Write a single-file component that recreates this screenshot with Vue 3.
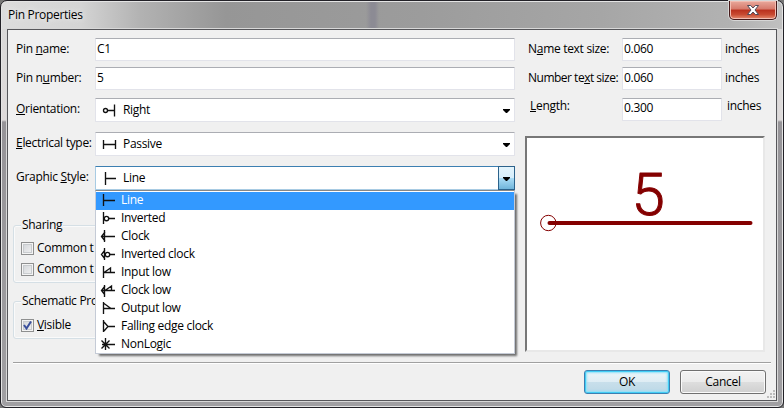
<script setup>
const items = [
  { label: 'Line', d: 'M3.5 2v12M4 8.5h11' },
  { label: 'Inverted', d: 'M3.5 2v12M9 8.5h6', dot: [6.5, 8.5] },
  { label: 'Clock', d: 'M4.5 2v12M2 8.5h13M5 4l-3.5 4.5L5 13' },
  { label: 'Inverted clock', d: 'M4.5 2v12M9.5 8.5h5.5M5 4L1.5 8.5L5 13', dot: [7.5, 8.5] },
  { label: 'Input low', d: 'M3.5 2v12M4 8.5h11M4 8.5L10.5 4v4.5' },
  { label: 'Clock low', d: 'M4.5 3v12M2 8.5h13M5 4L1.5 8.5L5 13M5 8.5L11.5 4v4.5' },
  { label: 'Output low', d: 'M3.5 2v12M4 8.5h11M4 3.5l7 5' },
  { label: 'Falling edge clock', d: 'M3.5 2v12M7.5 8.5h7.5M4 4l4 4.5l-4 4.5' },
  { label: 'NonLogic', d: 'M5.5 2v12M2 8.5h13M1.5 4.5l8 8M9.5 4.5l-8 8' },
]
</script>

<template>
  <div class="window">
    <header class="titlebar">
      <span class="title">Pin Properties</span>
      <button class="close" aria-label="Close">
        <svg width="14" height="12" viewBox="0 0 14 12">
          <path d="M1.5 1.5h3.2L7 4l2.3-2.5h3.2L9 6l3.5 4.5H9.3L7 8l-2.3 2.5H1.5L5 6z" fill="#fff" stroke="#4e4a58" />
        </svg>
      </button>
    </header>
    <main class="client">
      <div class="body">
        <section class="left">
          <div class="row"><label class="lbl">Pin <u>n</u>ame:</label><div class="field">C1</div></div>
          <div class="row"><label class="lbl">Pin n<u>u</u>mber:</label><div class="field">5</div></div>
          <div class="row combo-row first">
            <label class="lbl"><u>O</u>rientation:</label>
            <div class="field combo">
              <svg class="ico" width="18" height="16"><g class="ink"><circle cx="4.5" cy="8.5" r="2" /><path d="M6.5 8.5h7M13.5 2.5v12" /></g></svg>
              <span>Right</span><i class="arrow"></i>
            </div>
          </div>
          <div class="row combo-row">
            <label class="lbl"><u>E</u>lectrical type:</label>
            <div class="field combo">
              <svg class="ico" width="18" height="16"><path class="ink" d="M2.5 4v9M14.5 4v9M3 8.5h11" /></svg>
              <span>Passive</span><i class="arrow"></i>
            </div>
          </div>
          <div class="row combo-row">
            <label class="lbl">Graphic <u>S</u>tyle:</label>
            <div class="field combo open">
              <svg class="ico" width="18" height="16"><path class="ink" d="M4.5 2v13M5 8.5h10" /></svg>
              <span>Line</span><b class="drop"><i class="arrow"></i></b>
              <ul class="list">
                <li v-for="(it, i) in items" :key="it.label" :class="{ sel: i === 0 }">
                  <svg width="17" height="17"><g class="ink"><path :d="it.d" /><circle v-if="it.dot" :cx="it.dot[0]" :cy="it.dot[1]" r="2.2" /></g></svg>
                  <span>{{ it.label }}</span>
                </li>
              </ul>
            </div>
          </div>
          <div class="group sharing">
            <span class="legend">Sharing</span>
            <div class="check"><i class="box"></i>Common t</div>
            <div class="check"><i class="box"></i>Common t</div>
          </div>
          <div class="group schematic">
            <span class="legend">Schematic Pro</span>
            <div class="check">
              <i class="box"><svg width="9" height="9"><path d="M1 4l2.5 3.5L8 .5" fill="none" stroke="#3a4f9c" stroke-width="2" /></svg></i>
              <span><u>V</u>isible</span>
            </div>
          </div>
        </section>
        <section class="right">
          <div class="row"><label class="lbl">N<u>a</u>me text size:</label><div class="field">0.060</div><span class="unit">inches</span></div>
          <div class="row"><label class="lbl tight">Number te<u>x</u>t size:</label><div class="field">0.060</div><span class="unit">inches</span></div>
          <div class="row len"><label class="lbl"><u>L</u>ength:</label><div class="field">0.300</div><span class="unit">inches</span></div>
          <div class="preview">
            <svg width="236" height="211" viewBox="527 138 236 211">
              <text x="631.5" y="215" class="pin">5</text>
              <path d="M549.5 223h201" stroke="#840000" stroke-width="4" stroke-linecap="round" />
              <circle cx="548.3" cy="223" r="7.7" fill="none" stroke="#840000" />
            </svg>
          </div>
        </section>
      </div>
      <footer class="footer">
        <button class="btn ok">OK</button>
        <button class="btn">Cancel</button>
        <svg class="grip" width="9" height="9"><path d="M7 0h2v2H7zM4 3h2v2H4zM7 3h2v2H7zM1 6h2v2H1zM4 6h2v2H4zM7 6h2v2H7z" fill="#bcbcbc" /></svg>
      </footer>
    </main>
  </div>
</template>

<style>
body { margin: 0; background: #777; overflow: hidden; }
</style>

<style scoped>
* { box-sizing: border-box; }
.window {
  width: 784px; height: 408px; padding: 0 6px 6px; position: relative;
  border: 1px solid #222127; border-radius: 7px 7px 6px 6px;
  font: 12px/16px "Open Sans", "Noto Sans", sans-serif; letter-spacing: -0.3px; color: #000;
  background:
    linear-gradient(90deg, transparent 365px, #8c8b94 370px, #8c8b94 374px, transparent 378px) 0 0 / 100% 28px no-repeat,
    linear-gradient(90deg, #dcdcdc 0, #d4d4d4 80px, #b2b2b2 140px, #a3a3a3 185px, #969696 225px, #9c9c9c 420px, #a6a6a6 600px, #b2b2b2 730px, #c0c0c0) 0 0 / 100% 28px no-repeat,
    linear-gradient(180deg, #d8d8d8 0, #dedada 119px, #969498 121px, #a09fa2 100%);
  box-shadow: inset 0 0 0 1px #e4e4e4;
}
.titlebar { height: 28px; display: flex; justify-content: space-between; }
.title { padding: 6px 0 0 1px; text-shadow: 0 0 6px #fff; }
.close {
  width: 48px; height: 19px; margin: 0; padding: 0; display: flex; align-items: center; justify-content: center;
  border: 1px solid #46191a; border-top: 0; border-radius: 0 0 5px 5px;
  background: linear-gradient(#e9a99c, #d6796b 45%, #b9301d 50%, #c84a31 75%, #e58c70);
  box-shadow: inset 0 0 0 1px #f2bdb2, 0 0 0 1px #d6d6d6;
}
.client {
  height: 372px; border: 1px solid #56565a; background: #f0f0f0;
  box-shadow: 0 0 0 1px #d8d8d8; display: flex; flex-direction: column;
}
.body { height: 333px; display: flex; margin: 0 5px; border-bottom: 1px solid #a0a0a0; box-shadow: 0 1px #fff; }
.left { width: 502px; padding-top: 8px; margin-right: 10px; }
.row { display: flex; height: 23px; margin-bottom: 6px; }
.lbl { width: 82px; padding: 3px 0 0 3px; white-space: nowrap; flex: none; }
u { text-decoration: underline; text-underline-offset: 1px; text-decoration-thickness: 1px; text-decoration-skip-ink: none; }
.field {
  flex: 1; background: #fff; border: 1px solid #e2e3ea; border-top-color: #abadb3; border-radius: 1px;
  padding: 2px 1px; white-space: nowrap;
}
.combo-row { height: 24px; margin-bottom: 10px; }
.combo-row.first { margin-top: 8px; }
.left .row:nth-child(2) { margin-bottom: 8px; }
.combo { position: relative; display: flex; align-items: flex-start; padding: 3px 0 0 5px; }
.combo > span { margin-left: 4px; flex: 1; }
.ico { flex: none; }
.ink { fill: none; stroke: #111; stroke-width: 1.35; }
.arrow { width: 7px; height: 4px; margin: 7px 4px 0 0; background: #000; clip-path: polygon(0 0, 100% 0, 100% 1px, 4px 4px, 3px 4px, 0 1px); }
.open { border-color: #3c7fb1 #a8cbe3 #a8cbe3 #a8cbe3; }
.drop {
  width: 17px; height: 24px; margin: -4px -1px 0 0; padding-left: 4px; display: block;
  border: 1px solid #2c628b; background: linear-gradient(#e3f4fc, #d6eefb 48%, #a9dbf5 52%, #70b5da);
}
.drop .arrow { display: block; margin: 10px 0 0; }
.list {
  position: absolute; left: -1px; top: 23px; width: 420px; height: 164px; margin: 0; padding: 1px 0 0; list-style: none; z-index: 2;
  background: #fff; border: 1px solid #c5cbd6; border-top-color: #868686; box-shadow: 3px 3px 2px -1px rgba(0, 0, 0, .55);
}
.list li { display: flex; height: 18px; padding-left: 4px; }
.list li span { margin-left: 4px; }
.sel { background: #3399ff; color: #fff; }
.group { width: 495px; border: 1px solid #d5dfe5; border-radius: 3px; padding-left: 7px; box-shadow: inset 0 0 0 1px #fafafa; }
.legend { display: block; width: fit-content; height: 16px; margin-top: -9px; padding: 0 1px; background: #f0f0f0; }
.sharing { height: 58px; margin-top: 35px; }
.schematic { height: 38px; margin-top: 18px; }
.check { display: flex; height: 21px; line-height: 16px; align-items: flex-start; }
.sharing .legend + .check { margin-top: 7px; }
.schematic .check { margin-top: 8px; }
.box {
  width: 13px; height: 13px; margin: 2px 3px 0 0; padding: 1px; border: 1px solid #8e8f8f; display: block; line-height: 0; overflow: hidden;
  background: linear-gradient(135deg, #cfd2d6, #f4f4f4); box-shadow: inset 0 0 0 1px #f4f4f4, inset 0 0 0 2px #c8cbce;
}
.right { width: 240px; padding-top: 8px; }
.right .lbl { width: 97px; }
.tight { letter-spacing: -0.5px; }
.right .field { flex: none; width: 100px; }
.unit { padding: 3px 0 0 3px; }
.len { margin-top: 8px; margin-bottom: 15px; }
.len .field { padding-top: 1px; }
.len .lbl { padding: 0 0 0 5px; }
.len .unit { padding: 0 0 0 5px; }
.preview { width: 240px; height: 216px; background: #fff; border: 2px solid #696969; border-color: #777 #e8e8e8 #e8e8e8 #777; }
.preview svg { display: block; }
.pin { font: 300 60px Roboto, "Liberation Sans", sans-serif; fill: #840000; stroke: #840000; stroke-width: 1px; stroke-linejoin: round; }
.footer { position: relative; flex: 1; display: flex; justify-content: flex-end; gap: 10px; padding: 7px 10px 0 0; }
.btn {
  width: 86px; height: 24px; padding: 0; font: inherit; letter-spacing: inherit; color: #000;
  border: 1px solid #707070; border-radius: 3px; background: linear-gradient(#f2f2f2, #ebebeb 48%, #dddddd 52%, #cfcfcf); box-shadow: inset 0 0 0 1px #fafafa;
}
.ok { border-color: #3c7fb1; background: linear-gradient(#edf5f9, #dfedf4 48%, #c8dfeb 52%, #bcd8e6); box-shadow: inset 0 0 0 1px #42cdf5, inset 0 0 2px 2px #8fe0f8; }
.grip { position: absolute; right: 1px; bottom: 1px; }
</style>
